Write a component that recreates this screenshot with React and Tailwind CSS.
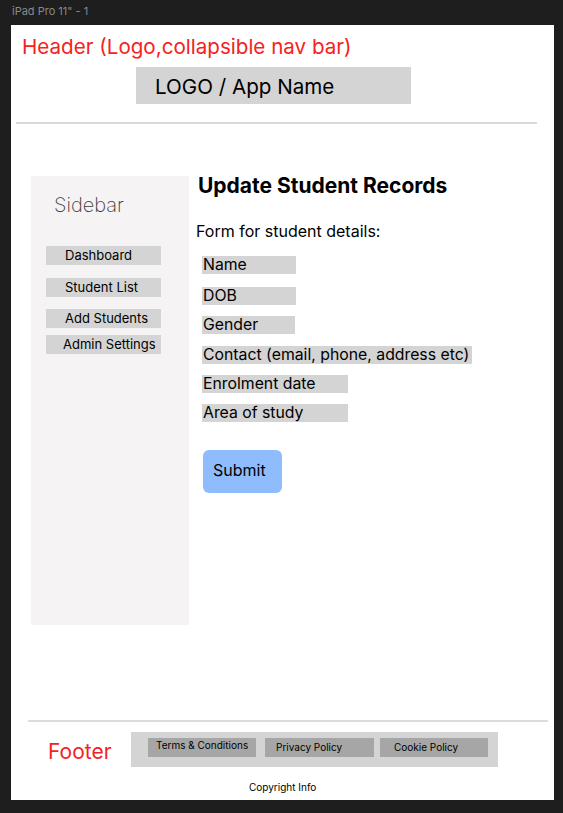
export default function App() {
  const sideItems = [
    { label: "Dashboard", cls: "mt-0 pl-[19px]" },
    { label: "Student List", cls: "mt-[13px] pl-[19px]" },
    { label: "Add Students", cls: "mt-[12px] pl-[19px]" },
    { label: "Admin Settings", cls: "mt-[7px] pl-[17px]" },
  ];

  const fields = [
    { label: "Name", w: "w-[94px]", mt: "mt-0" },
    { label: "DOB", w: "w-[94px]", mt: "mt-[13px]" },
    { label: "Gender", w: "w-[93px]", mt: "mt-[11px]" },
    { label: "Contact (email, phone, address etc)", w: "w-[270px]", mt: "mt-[12px]" },
    { label: "Enrolment date", w: "w-[146px]", mt: "mt-[11px]" },
    { label: "Area of study", w: "w-[146px]", mt: "mt-[11px]" },
  ];

  return (
    <div
      className="w-[563px] h-[813px] bg-[#1e1e1e] overflow-hidden"
      style={{ fontFamily: "Inter, 'Liberation Sans', sans-serif" }}
    >
      {/* frame label */}
      <div className="h-[25px] pl-[12px] pt-[4px] text-[11px] leading-[14px] text-[#8a8a8a]">
        iPad Pro 11" - 1
      </div>

      {/* frame */}
      <div className="ml-[11px] w-[543px] h-[775px] bg-white flex flex-col">
        {/* Header */}
        <header className="pl-[11px]">
          <div className="pt-[10px] text-[20.6px] leading-[24px] text-[#f52222]">
            Header (Logo,collapsible nav bar)
          </div>
          <div className="mt-[8px] ml-[114px] w-[275px] h-[37px] bg-[#d4d4d4] flex items-center pl-[19px] pt-[3px] text-[20.6px] text-black">
            LOGO / App Name
          </div>
        </header>
        <div className="mt-[18px] ml-[5px] w-[521px] h-[2px] bg-[#d9d9d9]" />

        {/* Body */}
        <div className="flex mt-[52px]">
          <aside className="ml-[20px] w-[158px] h-[449px] bg-[#f5f3f4] pl-[15px] pt-[16px]">
            <div className="pl-[8px] text-[20px] leading-[26px] font-extralight text-[#3a3a3a]">
              Sidebar
            </div>
            <div className="mt-[28px] flex flex-col">
              {sideItems.map((it) => (
                <div
                  key={it.label}
                  className={`${it.cls} w-[115px] h-[19px] bg-[#d4d4d4] flex items-center text-[13px] text-black`}
                >
                  {it.label}
                </div>
              ))}
            </div>
          </aside>

          <main className="ml-[10px] flex flex-col">
            <h1 className="-ml-[1px] text-[21px] leading-[20px] font-bold text-black">
              Update Student Records
            </h1>
            <p className="mt-[26px] -ml-[3px] text-[16px] leading-[18px] text-black">
              Form for student details:
            </p>
            <div className="mt-[16px] ml-[3px] flex flex-col">
              {fields.map((f) => (
                <div
                  key={f.label}
                  className={`${f.mt} ${f.w} h-[18px] bg-[#d4d4d4] flex items-center pl-[1px] text-[15.8px] text-black whitespace-nowrap`}
                >
                  {f.label}
                </div>
              ))}
            </div>
            <button className="mt-[28px] ml-[4px] w-[79px] h-[43px] rounded-[6px] bg-[#8ebcfd] text-[16px] text-black text-left pl-[10px] pb-[4px]">
              Submit
            </button>
          </main>
        </div>

        {/* Footer */}
        <div className="mt-auto">
          <div className="ml-[17px] w-[520px] h-[2px] bg-[#dcdcdc]" />
          <div className="flex items-center mt-[10px]">
            <div className="ml-[37px] w-[83px] pt-[5px] text-[21px] leading-[26px] text-[#f52222]">
              Footer
            </div>
            <div className="w-[367px] h-[35px] bg-[#d4d4d4] flex items-start pt-[6px] pl-[17px] gap-[9px]">
              <div className="w-[108px] h-[19px] bg-[#a6a6a6] text-[10px] leading-[14px] pl-[8px] text-black">
                Terms &amp; Conditions
              </div>
              <div className="w-[109px] h-[19px] bg-[#a6a6a6] flex items-center text-[10px] pl-[11px] text-black">
                Privacy Policy
              </div>
              <div className="w-[108px] h-[19px] -ml-[3px] bg-[#a6a6a6] flex items-center text-[10px] pl-[14px] text-black">
                Cookie Policy
              </div>
            </div>
          </div>
          <div className="mt-[14px] pl-[238px] pb-[7px] text-[10px] leading-[12px] text-black">
            Copyright Info
          </div>
        </div>
      </div>
    </div>
  );
}
